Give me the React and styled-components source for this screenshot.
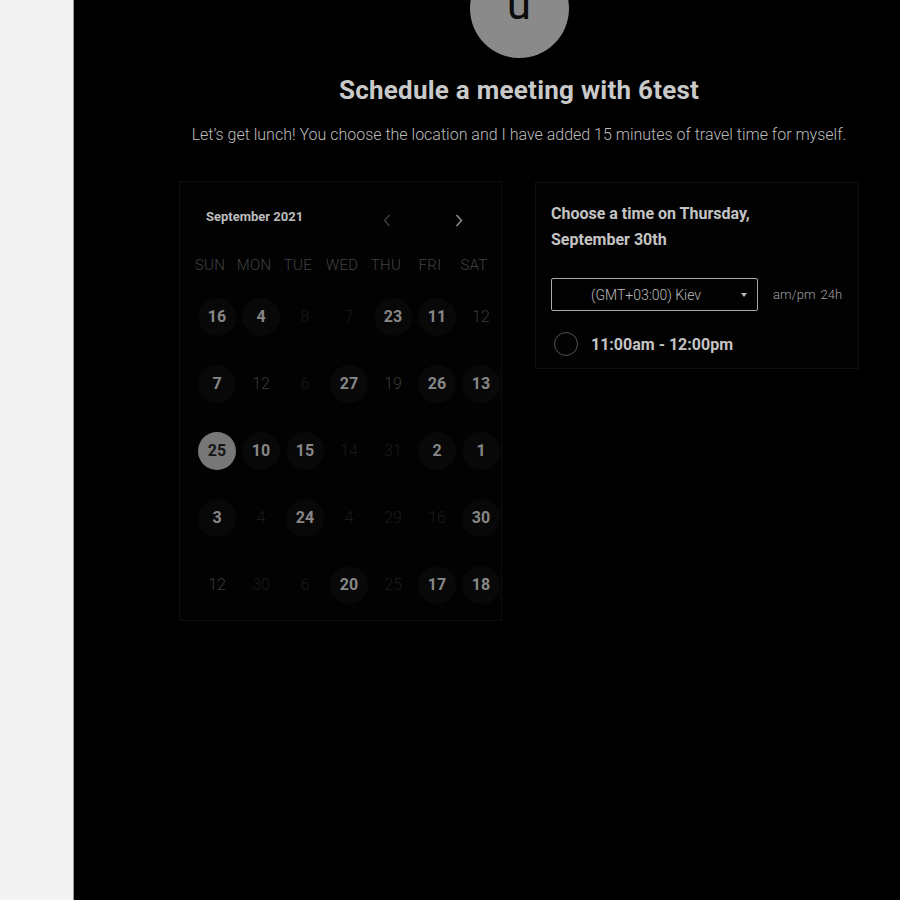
import React from "react";
import styled, { createGlobalStyle } from "styled-components";

const Global = createGlobalStyle`
  html, body { margin: 0; padding: 0; background: #000; }
  body { font-family: Roboto, "Liberation Sans", sans-serif; }
  * { box-sizing: border-box; }
`;

const Page = styled.div`
  display: flex;
  width: 900px;
  height: 900px;
  overflow: hidden;
`;

const Sidebar = styled.aside`
  width: 74px;
  flex: none;
  background: #f3f3f3;
  border-right: 1px solid #9a9a9a;
`;

const Main = styled.main`
  flex: 1;
  background: #000;
  padding: 0 41px 0 105px;
  display: flex;
  flex-direction: column;
  align-items: center;
`;

const Avatar = styled.div`
  width: 99px;
  height: 99px;
  border-radius: 50%;
  background: #8a8a8a;
  margin-top: -41px;
  display: flex;
  align-items: flex-end;
  justify-content: center;
  color: #0c0c0c;
  font-size: 44px;
  line-height: 1;
  padding-bottom: 32px;
`;

const Title = styled.h1`
  margin: 18px 0 0;
  font-size: 26px;
  font-weight: 700;
  color: #c9c9c9;
  line-height: 28px;
  letter-spacing: 0.25px;
`;

const Subtitle = styled.p`
  margin: 21px 0 0;
  font-size: 16px;
  font-weight: 300;
  color: #bdbdbd;
  line-height: 20px;
  white-space: nowrap;
`;

const Columns = styled.div`
  width: 680px;
  display: flex;
  gap: 33px;
  margin-top: 36px;
  align-items: flex-start;
`;

const CalendarCard = styled.section`
  width: 323px;
  height: 440px;
  border: 1px solid #0e0e0e;
  background: #020202;
  padding: 0 0 0 15px;
`;

const CalHeader = styled.div`
  display: flex;
  align-items: center;
  height: 69px;
  padding: 0 0 0 11px;
`;

const Month = styled.div`
  font-size: 13px;
  font-weight: 700;
  color: #bcbcbc;
  width: 159px;
`;

const Arrow = styled.span`
  display: flex;
  align-items: center;
  justify-content: center;
  width: 20px;
  height: 20px;
  margin-top: 8px;
  margin-left: ${(p) => p.$ml}px;
  color: ${(p) => (p.$dim ? "#3a3a3a" : "#8a8a8a")};
`;

const WeekRow = styled.div`
  display: grid;
  grid-template-columns: repeat(7, 44px);
  margin-left: -7px;
  height: 28px;
  align-items: center;
`;

const WeekDay = styled.div`
  text-align: center;
  font-size: 15px;
  font-weight: 300;
  color: #414141;
  letter-spacing: 0.3px;
`;

const DaysGrid = styled.div`
  display: grid;
  grid-template-columns: repeat(7, 44px);
  grid-auto-rows: 67px;
  margin-top: 4px;
`;

const DayCell = styled.div`
  display: flex;
  align-items: center;
  justify-content: center;
`;

const Day = styled.div`
  width: 38px;
  height: 38px;
  border-radius: 50%;
  display: flex;
  align-items: center;
  justify-content: center;
  font-size: 16px;
  background: ${(p) =>
    p.$kind === "sel" ? "#777" : p.$kind === "av" ? "#080808" : "transparent"};
  color: ${(p) =>
    p.$kind === "sel"
      ? "#151515"
      : p.$kind === "av"
      ? "#878787"
      : p.$kind === "mid"
      ? "#393939"
      : "#1a1a1a"};
  font-weight: ${(p) => (p.$kind === "sel" || p.$kind === "av" ? 700 : 300)};
`;

const TimeCard = styled.section`
  width: 324px;
  height: 187px;
  margin-top: 1px;
  border: 1px solid #0e0e0e;
  background: #020202;
  padding: 18px 15px 0 15px;
`;

const TimeTitle = styled.h2`
  margin: 0;
  font-size: 16px;
  font-weight: 700;
  color: #c4c4c4;
  line-height: 26px;
`;

const Controls = styled.div`
  display: flex;
  align-items: center;
  margin-top: 25px;
`;

const Select = styled.div`
  width: 207px;
  height: 33px;
  flex: none;
  border: 1px solid #a8a8a8;
  border-radius: 2px;
  display: flex;
  align-items: center;
  padding: 0 10px 0 39px;
  font-size: 14px;
  font-weight: 300;
  color: #bbb;
`;

const SelectText = styled.span`
  flex: 1;
`;

const Caret = styled.span`
  width: 0;
  height: 0;
  border-left: 3.5px solid transparent;
  border-right: 3.5px solid transparent;
  border-top: 4px solid #bbb;
`;

const Format = styled.div`
  margin-left: 15px;
  font-size: 13px;
  font-weight: 300;
  color: #a0a0a0;
  white-space: nowrap;
  word-spacing: 2px;
`;

const Slot = styled.div`
  display: flex;
  align-items: center;
  margin-top: 21px;
  margin-left: 3px;
  gap: 13px;
`;

const Radio = styled.span`
  width: 24px;
  height: 24px;
  border-radius: 50%;
  border: 1.5px solid #555;
`;

const SlotText = styled.span`
  font-size: 16px;
  font-weight: 700;
  color: #c4c4c4;
`;

const weekdays = ["SUN", "MON", "TUE", "WED", "THU", "FRI", "SAT"];

const days = [
  [16, "av"], [4, "av"], [8, "off"], [7, "off"], [23, "av"], [11, "av"], [12, "mid"],
  [7, "av"], [12, "mid"], [6, "off"], [27, "av"], [19, "mid"], [26, "av"], [13, "av"],
  [25, "sel"], [10, "av"], [15, "av"], [14, "off"], [31, "off"], [2, "av"], [1, "av"],
  [3, "av"], [4, "off"], [24, "av"], [4, "off"], [29, "off"], [16, "off"], [30, "av"],
  [12, "mid"], [30, "off"], [6, "off"], [20, "av"], [25, "off"], [17, "av"], [18, "av"],
];

const Chevron = ({ dir }) => (
  <svg width="8" height="13" viewBox="0 0 8 13" fill="none">
    <path
      d={dir === "left" ? "M6.5 1 L1.5 6.5 L6.5 12" : "M1.5 1 L6.5 6.5 L1.5 12"}
      stroke="currentColor"
      strokeWidth="1.6"
    />
  </svg>
);

export default function App() {
  return (
    <Page>
      <Global />
      <Sidebar />
      <Main>
        <Avatar>u</Avatar>
        <Title>Schedule a meeting with 6test</Title>
        <Subtitle>
          Let’s get lunch! You choose the location and I have added 15 minutes of travel time for myself.
        </Subtitle>
        <Columns>
          <CalendarCard>
            <CalHeader>
              <Month>September 2021</Month>
              <Arrow $dim $ml={12}>
                <Chevron dir="left" />
              </Arrow>
              <Arrow $ml={52}>
                <Chevron dir="right" />
              </Arrow>
            </CalHeader>
            <WeekRow>
              {weekdays.map((w) => (
                <WeekDay key={w}>{w}</WeekDay>
              ))}
            </WeekRow>
            <DaysGrid>
              {days.map(([n, k], i) => (
                <DayCell key={i}>
                  <Day $kind={k}>{n}</Day>
                </DayCell>
              ))}
            </DaysGrid>
          </CalendarCard>
          <TimeCard>
            <TimeTitle>
              Choose a time on Thursday,
              <br />
              September 30th
            </TimeTitle>
            <Controls>
              <Select>
                <SelectText>(GMT+03:00) Kiev</SelectText>
                <Caret />
              </Select>
              <Format>am/pm 24h</Format>
            </Controls>
            <Slot>
              <Radio />
              <SlotText>11:00am - 12:00pm</SlotText>
            </Slot>
          </TimeCard>
        </Columns>
      </Main>
    </Page>
  );
}
